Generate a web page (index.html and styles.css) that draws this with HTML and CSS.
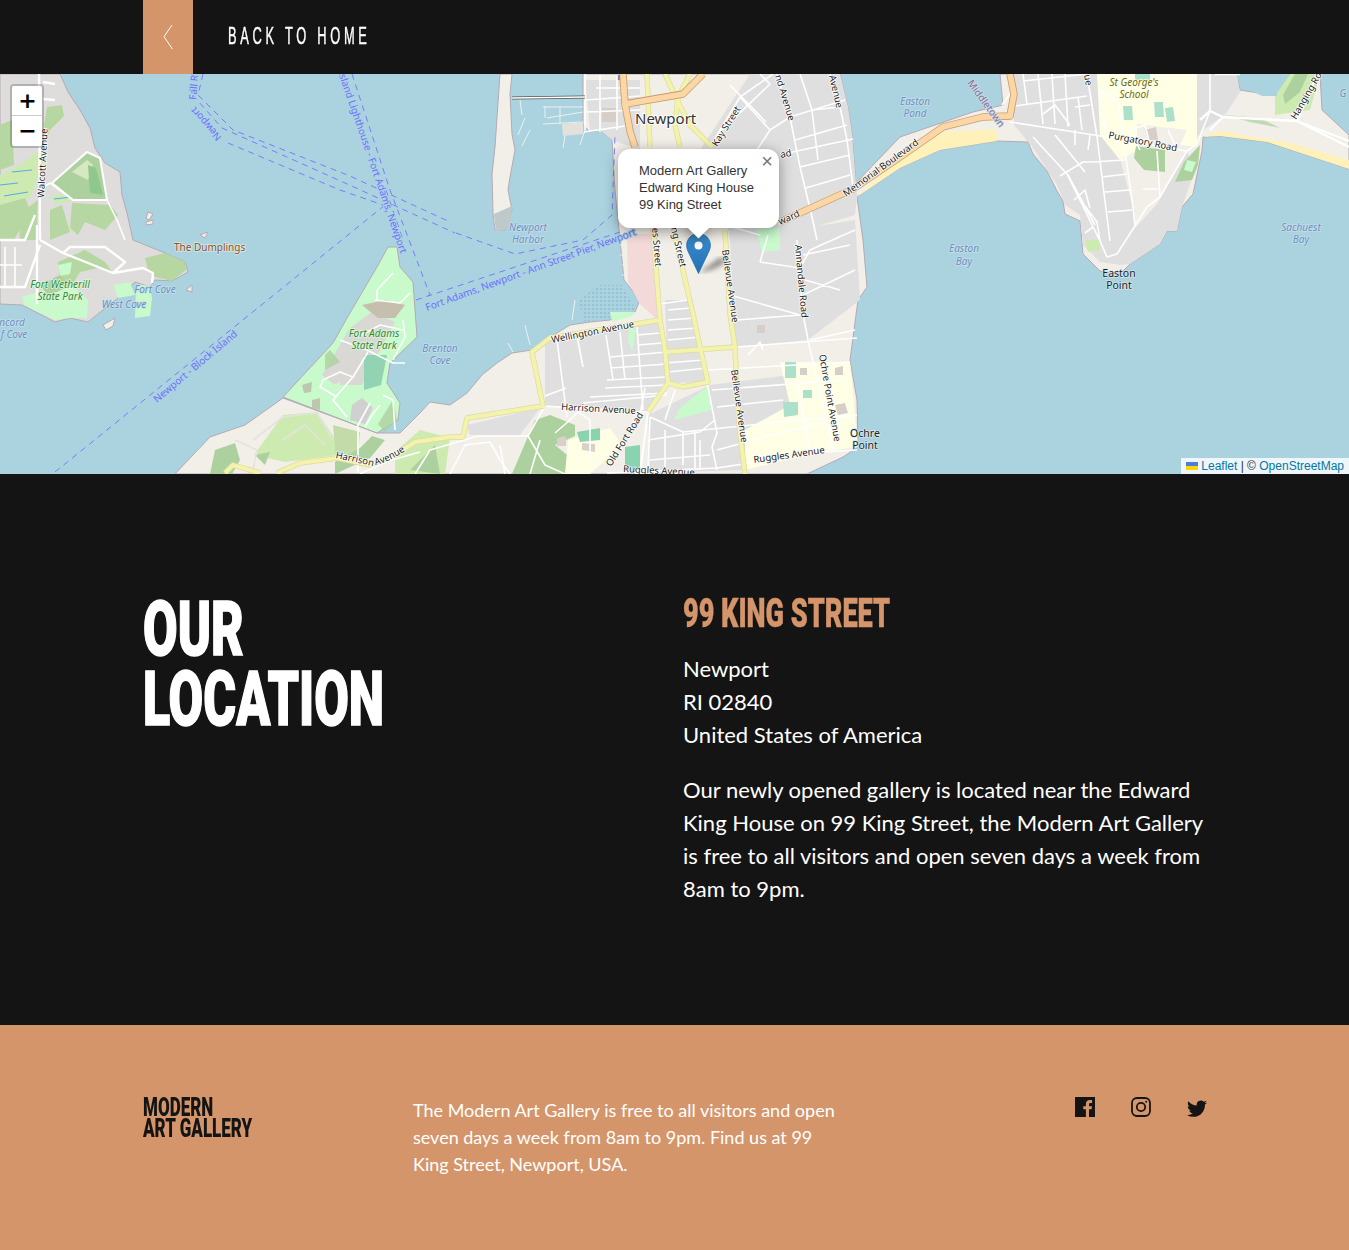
FILE: index.html
```html
<!DOCTYPE html>
<html lang="en">
<head>
  <meta charset="UTF-8">
  <title>Modern Art Gallery - Our Location</title>
  <link rel="stylesheet" href="styles.css">
</head>
<body>

  <header class="topbar">
    <a class="back-btn" href="#">
      <svg width="10" height="26" viewBox="0 0 10 26"><path d="M9 1 L1 12.7 L9.4 25" fill="none" stroke="#fff" stroke-width="1"/></svg>
    </a>
    <span class="back-text">BACK TO HOME</span>
  </header>

  <div class="map">
    <svg class="map-svg" width="1349" height="400" viewBox="0 74 1349 400">
      <defs>
        <pattern id="tidal" width="4" height="4" patternUnits="userSpaceOnUse">
          <circle cx="1" cy="1" r=".7" fill="#6f9fc0"/>
        </pattern>
      </defs>
      <rect x="0" y="74" width="1349" height="400" fill="#aad3df"/>

      <g class="tiles">
      <!-- land -->
      <path class="coast" fill="#dfdddc" d="M0,74 L60,74 L68,92 L80,110 L90,128 L95,148 L105,163 L120,172 L122,195 L127,213 L133,240 L165,253 L185,262 L188,272 L172,281 L155,280 L150,287 L135,282 L118,298 L88,322 L70,318 L55,322 L22,305 L0,304 Z"/>
      <path class="coast" fill="#f2efe9" d="M175,474 L210,437 L245,425 L283,398 L377,433 L400,433 L420,413 L430,402 L450,405 L467,393 L482,375 L497,363 L512,353 L532,350 L542,342 L570,325 L590,322 L610,320 L635,312 L640,300 L624,280 L620,240 L615,190 L612,140 L600,130 L590,132 L583,125 L583,74 L840,74 L848,107 L852,134 L857,197 L863,240 L867,287 L858,300 L850,360 L857,400 L858,447 L843,457 L807,474 Z"/>
      <path class="coast" fill="#c8facc" stroke="#8fc48a" stroke-width="2" d="M283,397 L333,343 L347,318 L377,267 L388,247 L397,247 L400,267 L413,282 L417,337 L390,363 L387,383 L400,403 L398,420 L377,433 Z"/>
      <path class="coast" fill="#f2efe9" d="M500,74 L512,74 L510,94 L512,134 L515,150 L510,177 L508,190 L512,210 L505,230 L495,230 L493,214 L492,174 L495,147 Z"/>
      <path class="coast" fill="#f2efe9" d="M1000,74 L1237,74 L1240,90 L1277,96 L1290,74 L1320,74 L1322,110 L1349,135 L1349,169 L1267,142 L1220,136 L1203,137 L1202,151 L1193,194 L1182,207 L1177,231 L1167,231 L1160,244 L1130,264 L1120,274 L1100,271 L1083,254 L1080,221 L1065,214 L1063,201 L1057,191 L1047,171 L1033,154 L1028,142 L997,141 L940,150 L900,168 L857,197 L853,186 L900,137 L973,112 L1003,105 Z"/>
      <path class="coast" fill="#f2efe9" d="M148,212 L153,214 L149,220 L146,218 Z M146,222 L153,220 L153,224 L146,225 Z M200,235 L208,232 L205,238 Z M103,325 L115,318 L113,326 L106,330 Z M186,290 L192,285 L192,292 Z"/>

      <!-- harbour details -->
      <path fill="url(#tidal)" d="M578,300 L600,285 L622,285 L636,310 L610,318 L585,322 Z"/>
      <path fill="#bfc9c9" d="M494,214 L512,206 L510,228 L496,232 Z"/>
      <g fill="none" stroke="#eef0ec" stroke-width="1">
        <path d="M543,107 L583,107 M547,118 L583,112 M543,124 L583,122 M560,107 L560,124 M567,124 L563,148 M585,130 L580,145 M545,106 L545,118 M520,100 L522,115 M525,118 L518,135 M522,146 L530,130"/>
        <path d="M620,245 L640,245 M620,255 L640,255 M622,265 L640,265 M622,275 L640,275 M530,345 L525,325 M513,352 L508,343 M575,300 L572,320"/>
      </g>
      <path fill="#e3e1dc" d="M562,124 L583,122 L583,134 L563,136 Z"/>
      <path fill="#7b86ad" d="M617,75 L623,75 L623,81 L617,81 Z"/>

      <!-- sand -->
      <path fill="#fff1ba" d="M857,197 L900,157 L943,132 L996,129 L997,141 L940,150 L900,168 Z M1203,137 L1220,131 L1290,143 L1349,160 L1349,169 L1267,142 L1220,136 Z"/>

      <!-- residential -->
      <path fill="#e0dfdf" d="M750,74 L840,74 L848,107 L852,134 L857,197 L855,215 L770,240 L730,240 L722,190 L735,150 L700,150 Z"/>
      <path fill="#e0dfdf" d="M585,80 L640,80 L640,150 L612,140 L600,130 L590,130 Z"/>
      <path fill="#e0dfdf" d="M730,240 L855,220 L860,300 L808,340 L735,347 Z"/>
      <path fill="#e0dfdf" d="M545,340 L660,320 L668,383 L648,412 L545,406 Z"/>
      <path fill="#e0dfdf" d="M665,300 L690,300 L708,382 L668,383 Z"/>
      <path fill="#e0dfdf" d="M710,385 L790,375 L800,450 L745,470 L650,473 L648,415 Z"/>
      <path fill="#e0dfdf" d="M467,425 L540,408 L520,435 L470,435 Z"/>
      <path fill="#e0dfdf" d="M1012,74 L1097,74 L1133,207 L1135,228 L1157,204 L1187,151 L1195,170 L1182,207 L1177,231 L1167,231 L1160,244 L1130,264 L1120,265 L1100,262 L1083,245 L1080,215 L1065,205 L1057,185 L1033,148 L1014,125 Z"/>
      <path fill="#e0dfdf" d="M1195,74 L1237,74 L1240,92 L1225,115 L1203,130 L1195,140 Z"/>
      <path fill="#f3d9d8" d="M627,234 L657,234 L660,322 L640,304 L628,282 Z"/>
      <path fill="#f2efe9" d="M660,234 L672,234 L688,300 L665,300 Z M680,270 L725,265 L730,314 L696,318 Z"/>

      <!-- jamestown greens -->
      <path fill="#b6d6a2" d="M47,107 L62,105 L64,116 L50,130 L46,140 L44,125 Z"/>
      <path fill="#b6d6a2" d="M0,125 L12,120 L14,165 L0,170 Z"/>
      <path fill="#cdebb0" d="M0,175 L20,165 L42,148 L46,158 L38,180 L30,198 L0,205 Z M50,197 L72,192 L76,200 L56,204 Z"/>
      <g stroke="#5ba8e8" stroke-width="1" fill="none"><path d="M0,185 L18,183 M4,196 L28,192 M12,172 L32,170 M54,199 L72,197"/></g>
      <path fill="#b6d6a2" d="M0,205 L25,198 L30,210 L14,240 L0,240 Z M18,215 L38,200 L36,240 L20,240 Z M50,210 L62,205 L70,232 L50,240 Z M72,203 L110,205 L118,215 L105,230 L85,222 L78,235 L70,228 Z"/>
      <path fill="#add19e" stroke="#fff" stroke-width="2" d="M52,183 L87,152 L100,158 L107,200 L73,200 Z"/>
      <path fill="#d5e8c2" d="M72,172 L87,160 L93,165 L88,180 Z"/>
      <path fill="#8fc88c" d="M88,165 L96,168 L103,195 L90,193 Z"/>
      <path fill="#b6d6a2" d="M58,262 L85,250 L105,262 L112,272 L98,268 L80,272 L72,285 L60,285 Z M145,258 L165,253 L185,262 L186,270 L172,281 L155,277 L148,270 Z"/>
      <path fill="#c8facc" d="M22,297 L60,285 L72,285 L88,300 L87,318 L70,318 L55,320 L24,305 Z M113,285 L130,282 L135,295 L118,298 Z M136,284 L150,286 L152,298 L150,316 L135,318 Z M58,265 L72,262 L70,274 L60,276 Z"/>
      <path fill="#add19e" d="M40,285 L60,275 L70,286 L48,296 Z"/>

      <!-- fort adams -->
      <path fill="#d9d8d5" d="M350,328 L372,312 L395,322 L380,350 L362,385 L335,385 L322,375 Z"/>
      <path fill="#c7bfae" d="M362,305 L385,300 L405,305 L395,318 L378,318 Z"/>
      <path fill="#91d3b2" d="M364,355 L387,355 L381,385 L364,390 Z"/>
      <path fill="#c8facc" d="M325,388 L340,382 L340,400 L322,398 Z"/>
      <path fill="#bcc7ad" d="M302,385 L312,382 L311,392 L304,393 Z M312,400 L320,398 L320,410 L312,408 Z"/>
      <path fill="#cfd0cf" d="M352,405 L362,398 L373,408 L365,424 L350,420 Z"/>
      <path fill="#add19e" opacity=".8" d="M325,355 L330,350 L340,362 L325,370 Z M378,424 L393,400 L397,420 L385,432 Z"/>

      <!-- mainland greens -->
      <path fill="#cdebb0" d="M254,455 L283,415 L317,412 L336,440 L336,455 L300,460 L285,462 Z"/>
      <path fill="#c2dba9" d="M333,425 L360,432 L358,455 L336,458 Z"/>
      <path fill="#add19e" d="M210,474 L215,450 L235,443 L240,460 L232,474 Z M255,455 L270,452 L265,465 Z"/>
      <path fill="#add19e" d="M335,462 L360,448 L372,436 L385,440 L370,458 L335,474 Z"/>
      <path fill="#cdebb0" d="M395,452 L420,430 L450,438 L445,474 L395,474 Z"/>
      <path fill="#add19e" d="M410,470 L435,445 L440,474 Z"/>
      <path fill="#add19e" d="M512,474 L535,420 L550,415 L575,425 L575,436 L555,445 L590,474 Z"/>
      <path fill="#ffffe5" d="M565,474 L568,440 L610,428 L622,445 L590,474 Z"/>
      <path fill="#8ad3af" d="M577,432 L600,428 L600,440 L580,442 Z M625,447 L640,445 L640,470 L625,472 Z"/>
      <path fill="#d9d0c9" d="M557,438 L566,436 L566,446 L557,446 Z M582,443 L595,444 L595,452 L582,450 Z"/>

      <!-- newport greens and schools -->
      <path fill="#c8facc" d="M610,312 L635,312 L632,316 L612,322 Z M630,325 L636,330 L632,352 L628,340 Z M680,408 L708,386 L712,410 L674,420 Z M756,228 L780,228 L780,250 L762,252 Z"/>
      <path fill="#ffffe5" d="M1097,74 L1197,74 L1197,147 L1180,145 L1187,130 L1137,124 L1137,150 L1120,160 L1100,135 Z"/>
      <path fill="#ffffe5" d="M780,362 L850,362 L858,447 L820,452 L745,470 L745,430 L790,405 Z"/>
      <path fill="#ade0cb" d="M1123,106 L1132,106 L1133,120 L1124,120 Z M1154,102 L1163,102 L1164,117 L1155,117 Z M1165,108 L1173,107 L1175,121 L1167,122 Z M785,362 L796,362 L796,378 L785,378 Z M783,402 L798,402 L798,415 L784,417 Z M1135,74 L1150,74 L1150,80 L1135,80 Z M803,390 L812,390 L812,398 L803,398 Z"/>
      <path fill="#add19e" d="M1136,146 L1165,150 L1165,172 L1144,170 L1134,158 Z M1184,162 L1200,145 L1198,165 L1192,180 L1175,182 Z"/>
      <path fill="#c8facc" d="M1187,160 L1196,162 L1192,172 L1184,170 Z"/>
      <path fill="#cdebb0" d="M1275,96 L1290,74 L1320,74 L1310,110 L1275,115 Z M1085,240 L1100,240 L1100,250 L1088,252 Z"/>
      <path fill="#add19e" d="M1283,95 L1295,74 L1308,74 L1300,92 L1285,104 Z"/>
      <path fill="#add19e" opacity=".7" d="M1225,115 L1260,118 L1280,128 L1250,122 Z"/>
      <path fill="#aad3df" d="M1237,74 L1277,74 L1277,96 L1262,96 L1240,85 Z"/>
      <path fill="#d5cfc8" d="M602,108 L618,108 L618,122 L602,122 Z M1145,130 L1156,127 L1158,140 L1148,140 Z M800,368 L807,368 L807,375 L800,375 Z M835,368 L843,366 L843,375 L835,375 Z M835,405 L845,403 L848,413 L838,415 Z M757,325 L765,325 L765,333 L757,333 Z"/>

      <!-- tertiary and residential streets -->
      <g fill="none" stroke="#fff" stroke-width="1.6" stroke-linejoin="round">
        <path stroke-width="2.4" d="M39,74 L40,240 M37,225 L37,304 M40,240 L63,253 L113,273 L143,268 L153,273 L152,283 M0,240 L25,240 L35,215 M0,287 L25,287 L40,245 M63,253 L70,247 L105,247 L125,262 L113,273 M43,82 L55,84 M43,99 L55,100"/>
        <path d="M50,183 L39,190 M50,183 L73,200 M107,200 L117,220 L125,240 M5,247 L5,287 M15,247 L15,287 M0,265 L22,265"/>
        <path stroke="#e4e3de" d="M235,440 L257,450 L253,470 M253,440 L283,417 L317,413 L333,440 M283,440 L305,425 L325,445"/>
        <path d="M358,427 L358,473 M370,403 L357,427 M340,340 L367,350 L393,363 L405,363 M368,352 L353,377 L340,372 L323,380 L320,387 L337,397 M353,377 L333,400 L347,417 M403,320 L405,337 L393,360 M358,337 L380,325 L403,330 M377,300 L377,290 L393,273 M375,300 L400,303 L410,293 M380,405 L372,415 L365,427 M383,395 L393,400 L395,430"/>
        <path d="M360,474 L385,462 L420,452 M415,474 L430,450 L478,436 L528,436 L545,406 M450,474 L465,445 L490,442 L500,460 L510,474 M528,436 L545,465 L565,474 M555,433 L570,420 L578,412 L590,420 L590,460 M505,474 L500,445 M530,474 L540,440"/>
        <path d="M596,88 L640,88 M586,100 L640,96 M586,112 L640,110 M584,132 L625,126 M600,75 L600,132 M617,75 L617,130 M585,74 L585,130"/>
        <path d="M710,147 L740,97 L773,74 M777,74 L790,117 L800,167 L812,217 L817,240 M830,74 L840,107 L847,140 L853,187 M783,154 L853,139 M760,74 L770,84 L722,130 M740,97 L770,130 L790,117 M770,130 L757,150 M730,85 L766,122 M800,74 L812,110 L818,160 M812,110 L840,107 M790,117 L845,100 M795,140 L847,125 M757,150 L770,165 M800,167 L850,155 M806,188 L850,175 M815,205 L850,187 M757,150 L745,175 M760,170 L780,225 M768,235 L760,262 M760,262 L800,268 M725,225 L760,235 M800,268 L810,250 L855,230 M803,295 L855,270 M803,255 L850,245 M805,280 L840,290 M730,295 L800,315 M810,340 L855,330"/>
        <path d="M797,240 L803,314 L808,340 L833,450 M543,406 L647,412 M607,473 L717,468 L823,452 L857,450 M650,417 L683,432 L850,415 M737,347 L857,338 M708,370 L850,362 M712,390 L843,380 M717,407 L783,400 M717,450 L783,432 L857,415 M707,382 L717,433 L712,447 L717,470 M797,382 L810,450 M737,320 L800,315 M688,300 L660,304 M668,310 L690,308 M668,320 L695,318 M668,330 L697,328 M668,340 L700,337 M665,363 L704,360 M668,372 L707,368"/>
        <path d="M557,340 L567,417 M577,336 L583,367 M606,335 L613,380 M620,332 L625,380 M637,327 L643,410 M610,357 L667,352 M610,368 L667,364 M607,380 L667,377 M605,388 L667,385 M590,397 L667,393 M637,335 L660,333 M638,345 L662,343 M583,403 L667,395 M545,396 L566,388 M645,388 L640,415 M660,395 L650,412 M675,390 L665,420 M650,417 L648,473 M648,440 L700,432 M683,432 L683,465 M695,430 L695,468 M700,440 L700,470 M715,420 L700,432 M650,460 L710,455 M665,430 L665,470 M735,395 L745,470 M748,355 L760,342 L763,350"/>
        <path stroke-width="2" d="M648,412 L640,473"/>
        <path d="M1010,122 L1107,137 L1187,151 L1197,144 L1210,111 L1210,74 M1033,137 L1067,174 L1100,241 L1107,257 L1117,254 L1147,207 L1160,197 L1187,151 M1087,74 L1097,137 L1110,241 M1117,94 L1133,207 L1135,227 M1157,151 L1160,197 M1002,105 L1013,90 M1023,74 L1027,104 M1038,74 L1043,124 M1052,74 L1055,124 M1065,74 L1068,127 M1078,97 L1082,130 M1015,106 L1087,96 M1023,81 L1087,74 M1043,114 L1055,105 L1070,125 M1075,107 L1090,105 M1092,162 L1125,160 M1102,177 L1127,174 M1105,192 L1130,190 M1108,212 L1132,210 M1060,176 L1083,162 L1092,162 M1074,200 L1085,190 L1090,208 M1068,175 L1095,225 M1055,135 L1085,172 M1075,130 L1075,145 M1090,135 L1088,150 M1143,189 L1160,189 M1085,206 L1097,222 L1100,241 M1093,227 L1085,233"/>
        <path stroke-width="2.4" d="M1210,111 L1223,117 L1297,121 L1349,147 M1210,111 L1200,120 M1223,117 L1210,130 M1297,121 L1317,74 M1297,121 L1349,141 M1240,74 L1215,74"/>
        <path d="M1115,100 L1100,90 L1105,130 M1140,150 L1130,130 L1145,125 L1150,145 M1168,130 L1175,145 M1110,87 L1150,87"/>
      </g>

      <!-- causeway -->
      <path d="M512,98 L585,97" fill="none" stroke="#555" stroke-width="3"/>
      <path d="M512,98 L585,97" fill="none" stroke="#fff" stroke-width="1.6"/>

      <!-- secondary roads -->
      <g fill="none" stroke="#dcdc9c" stroke-width="5.4" stroke-linejoin="round">
        <path id="sec" d="M647,74 L650,147 M653,227 L660,320 L665,350 L668,383 L648,412 M673,227 L693,314 L700,347 L708,382 L683,387 L668,383 M725,231 L730,314 L735,347 L737,393 L740,433 L745,474 M665,352 L735,347 M450,437 L463,437 L467,418 L543,406 L532,352 L550,338 L660,320 M277,473 L300,463 L337,458 L370,465 L395,455 L415,442 L450,437 M225,473 L233,465 L260,473 M665,74 L677,100 L690,125 L712,147 M690,74 L678,98 L675,125 L680,147"/>
      </g>
      <use href="#sec" fill="none" stroke="#f3f3ad" stroke-width="4"/>

      <!-- primary roads -->
      <g fill="none" stroke="#c69c6d" stroke-width="7.4" stroke-linejoin="round">
        <path id="pri" d="M623,74 L625,104 L683,94 L703,74 M625,104 L630,131 L635,147 M780,222 L853,189 L900,157 L943,127 L983,117 L1010,116 L1014,94 L1010,74"/>
      </g>
      <use href="#pri" fill="none" stroke="#fcd6a4" stroke-width="5.8"/>
      </g>

      <!-- ferry routes -->
      <g fill="none" stroke="#7b7bff" stroke-width="1" stroke-dasharray="6 5">
        <path d="M203,74 L198,95 L233,130 L350,176 L450,222"/>
        <path d="M192,74 L190,92 L222,128 L345,183 L455,233"/>
        <path d="M228,143 L340,190 L383,205"/>
        <path d="M352,74 L390,190 L430,295 L423,298"/>
        <path d="M55,472 L385,205"/>
        <path d="M416,300 L620,232"/>
        <path d="M456,233 L515,254 L583,240 L612,215 L615,135"/>
        <path d="M386,190 L403,240"/>
      </g>

      <!-- water and place labels -->
      <g class="lbl-ferry">
        <text transform="translate(157,403) rotate(-40)">Newport - Block Island</text>
        <text transform="translate(427,311) rotate(-20)">Fort Adams, Newport - Ann Street Pier, Newport</text>
        <text transform="translate(338,72) rotate(71)">Island Lighthouse - Fort Adams, Newport</text>
        <text transform="translate(196,100) rotate(-85)">Fall R</text>
        <text transform="translate(222,137) rotate(-131)">Newport</text>
      </g>
      <g class="lbl-water">
        <text x="528" y="231">Newport</text><text x="528" y="243">Harbor</text>
        <text x="915" y="105">Easton</text><text x="915" y="117">Pond</text>
        <text x="964" y="252">Easton</text><text x="964" y="265">Bay</text>
        <text x="1301" y="231">Sachuest</text><text x="1301" y="243">Bay</text>
        <text x="440" y="352">Brenton</text><text x="440" y="364">Cove</text>
        <text x="155" y="293">Fort Cove</text>
        <text x="124" y="308">West Cove</text>
        <text x="12" y="326">ncord</text><text x="14" y="338">f Cove</text>
        <text x="1343" y="97">G</text>
      </g>
      <g class="lbl-park">
        <text x="60" y="288">Fort Wetherill</text><text x="60" y="300">State Park</text>
        <text x="374" y="337">Fort Adams</text><text x="374" y="349">State Park</text>
      </g>
      <g class="lbl-school">
        <text x="1134" y="86">St George's</text><text x="1134" y="98">School</text>
      </g>
      <text class="lbl-feature" x="174" y="251">The Dumplings</text>
      <text class="lbl-town" x="635" y="124">Newport</text>
      <g class="lbl-place">
        <text x="1119" y="277">Easton</text><text x="1119" y="289">Point</text>
        <text x="865" y="437">Ochre</text><text x="865" y="449">Point</text>
      </g>
      <text class="lbl-bound" transform="translate(967,83) rotate(54)">Middletown</text>

      <!-- road labels -->
      <path id="harr" d="M335,458 Q360,463 372,466 Q390,462 408,449" fill="none"/>
      <g class="lbl-road">
        <text transform="translate(44,198) rotate(-87)">Walcott Avenue</text>
        <text transform="translate(552,343) rotate(-11)">Wellington Avenue</text>
        <text transform="translate(561,410) rotate(3)">Harrison Avenue</text>
        <text><textPath href="#harr">Harrison Avenue</textPath></text>
        <text transform="translate(754,463) rotate(-8)">Ruggles Avenue</text>
        <text transform="translate(623,472) rotate(3)">Ruggles Avenue</text>
        <text transform="translate(611,467) rotate(-58)">Old Fort Road</text>
        <text transform="translate(722,250) rotate(82)">Bellevue Avenue</text>
        <text transform="translate(731,370) rotate(82)">Bellevue Avenue</text>
        <text transform="translate(795,245) rotate(85)">Annandale Road</text>
        <text transform="translate(819,355) rotate(80)">Ochre Point Avenue</text>
        <text transform="translate(671,228) rotate(77)">ng Street</text>
        <text transform="translate(652,228) rotate(85)">es Street</text>
        <text transform="translate(717,147) rotate(-58)">Kay Street</text>
        <text transform="translate(846,197) rotate(-36)">Memorial Boulevard</text>
        <text transform="translate(780,225) rotate(-24)">ward</text>
        <text transform="translate(781,158) rotate(-12)">ad</text>
        <text transform="translate(1108,138) rotate(11)">Purgatory Road</text>
        <text transform="translate(1296,120) rotate(-60)">Hanging Ro</text>
        <text transform="translate(775,76) rotate(73)">nd Avenue</text>
        <text transform="translate(829,76) rotate(77)">Avenue</text>
        <text transform="translate(1084,75) rotate(80)">ue</text>
      </g>
    </svg>

    <div class="zoom-ctl">
      <a class="zoom-btn" href="#">+</a>
      <a class="zoom-btn" href="#">&minus;</a>
    </div>

    <div class="marker">
      <svg width="50" height="41" viewBox="0 0 50 41">
        <defs>
          <linearGradient id="pin" x1="0" y1="0" x2="0" y2="1">
            <stop offset="0" stop-color="#3e8fd0"/>
            <stop offset="1" stop-color="#1f6fb5"/>
          </linearGradient>
          <filter id="soft"><feGaussianBlur stdDeviation="2.4"/></filter>
        </defs>
        <path d="M13 40 L33 25 Q40 24 38 30 Q30 37 13 40 Z" fill="#000" opacity=".4" filter="url(#soft)"/>
        <path d="M12.5 0.6 C5.8 0.6 0.6 5.8 0.6 12.4 C0.6 15 1.6 17.6 2.8 19.9 L12.5 40.4 L22.2 19.9 C23.4 17.6 24.4 15 24.4 12.4 C24.4 5.8 19.2 0.6 12.5 0.6 Z" fill="url(#pin)" stroke="#2571ad" stroke-width=".8"/>
        <circle cx="12.5" cy="12.5" r="4" fill="#fff"/>
      </svg>
    </div>

    <div class="popup">
      <a class="popup-close" href="#">&#215;</a>
      <div class="popup-content">Modern Art Gallery<br>Edward King House<br>99 King Street</div>
      <div class="popup-tip-wrap"><div class="popup-tip"></div></div>
    </div>

    <div class="attrib">
      <svg width="12" height="8" viewBox="0 0 12 8"><rect width="12" height="4" fill="#4C7BE1"/><rect y="4" width="12" height="4" fill="#FFD500"/></svg>
      <a href="#">Leaflet</a> | &copy; <a href="#">OpenStreetMap</a>
    </div>
  </div>

  <section class="location">
    <h1 class="loc-title">OUR<br>LOCATION</h1>
    <div class="loc-info">
      <h2 class="loc-street">99 KING STREET</h2>
      <p>Newport<br>RI 02840<br>United States of America</p>
      <p>Our newly opened gallery is located near the Edward King House on 99 King Street, the Modern Art Gallery is free to all visitors and open seven days a week from 8am to 9pm.</p>
    </div>
  </section>

  <footer class="footer">
    <div class="logo">MODERN<br>ART GALLERY</div>
    <p class="foot-text">The Modern Art Gallery is free to all visitors and open seven days a week from 8am to 9pm. Find us at 99 King Street, Newport, USA.</p>
    <div class="social">
      <a href="#"><svg width="20" height="20" viewBox="0 0 20 20"><path fill="#141414" d="M0 0 H20 V20 H14 V12.3 H16.6 L17 9.3 H14 V7.4 C14 6.5 14.3 5.9 15.5 5.9 H17.1 V3.2 C16.8 3.2 15.9 3.1 14.8 3.1 C12.5 3.1 10.9 4.5 10.9 7.1 V9.3 H8.3 V12.3 H10.9 V20 H0 Z"/></svg></a>
      <a href="#"><svg width="20" height="20" viewBox="0 0 20 20" fill="none" stroke="#141414" stroke-width="1.8"><rect x="1" y="1" width="18" height="18" rx="5"/><circle cx="10" cy="10" r="4.2"/><circle cx="15.2" cy="4.8" r="1" fill="#141414" stroke="none"/></svg></a>
      <a href="#"><svg width="20" height="20" viewBox="0 -2 24 24" overflow="visible"><path fill="#141414" d="M23.953 4.57a10 10 0 01-2.825.775 4.958 4.958 0 002.163-2.723c-.951.555-2.005.959-3.127 1.184a4.92 4.92 0 00-8.384 4.482C7.69 8.095 4.067 6.13 1.64 3.162a4.822 4.822 0 00-.666 2.475c0 1.71.87 3.213 2.188 4.096a4.904 4.904 0 01-2.228-.616v.06a4.923 4.923 0 003.946 4.827 4.996 4.996 0 01-2.212.085 4.936 4.936 0 004.604 3.417 9.867 9.867 0 01-6.102 2.105c-.39 0-.779-.023-1.17-.067a13.995 13.995 0 007.557 2.209c9.053 0 13.998-7.496 13.998-13.985 0-.21 0-.42-.015-.63A9.935 9.935 0 0024 4.59z"/></svg></a>
    </div>
  </footer>

</body>
</html>
```

FILE: styles.css
```css
body {
  margin: 0;
  font-family: Lato, "Open Sans", sans-serif;
  background-color: #141414;
  color: #fff;
}
a {
  text-decoration: none;
}

/* top bar */
.topbar {
  display: flex;
  align-items: center;
  height: 74px;
  padding-left: 143px;
  background-color: #141414;
}
.back-btn {
  display: flex;
  align-items: center;
  justify-content: center;
  width: 50px;
  height: 74px;
  background-color: #d5956b;
}
.back-text {
  margin: 0 0 2px 35px;
  font-family: "Liberation Sans", sans-serif;
  font-size: 23px;
  letter-spacing: 6.6px;
  white-space: nowrap;
  transform: scaleX(0.56);
  transform-origin: left center;
  -webkit-text-stroke: .4px #fff;
}

/* map */
.map {
  position: relative;
  height: 400px;
  overflow: hidden;
  background-color: #aad3df;
}
.map-svg {
  display: block;
}
.tiles {
  filter: blur(.5px);
}
.coast {
  stroke: #b5a9b3;
  stroke-width: 1;
}
.map-svg text {
  font-family: "Noto Sans", "Open Sans", sans-serif;
  font-size: 10px;
  paint-order: stroke;
  stroke-linejoin: round;
}
.lbl-ferry text {
  fill: #6f6fff;
  stroke: #aad3df;
  stroke-width: 2px;
}
.lbl-water text {
  fill: #6c8fc4;
  font-style: italic;
  text-anchor: middle;
  stroke: #c6e0e9;
  stroke-width: 1.5px;
}
.lbl-park text {
  fill: #2b8a36;
  font-style: italic;
  text-anchor: middle;
  stroke: #e4f5dc;
  stroke-width: 1.5px;
}
.lbl-school text {
  fill: #6c6c22;
  font-style: italic;
  text-anchor: middle;
  stroke: #ffffe5;
  stroke-width: 1.5px;
}
.lbl-feature {
  fill: #7d5230;
  stroke: #e2e9e4;
  stroke-width: 1.5px;
}
.map-svg .lbl-town {
  fill: #333;
  font-size: 15px;
  stroke: #fff;
  stroke-width: 2px;
}
.lbl-place text {
  fill: #222;
  font-size: 10.5px !important;
  text-anchor: middle;
  stroke: #d5e8ee;
  stroke-width: 1.5px;
}
.lbl-bound {
  fill: #8d6a94;
  stroke: #c6e0e9;
  stroke-width: 1.5px;
}
.lbl-road text {
  fill: #1c1c1c;
  font-size: 9.5px !important;
  stroke: #fff;
  stroke-width: 1.5px;
}

/* leaflet bits */
.zoom-ctl {
  position: absolute;
  top: 10px;
  left: 10px;
  border: 2px solid rgba(0,0,0,0.2);
  border-radius: 4px;
  background-clip: padding-box;
}
.zoom-btn {
  display: block;
  width: 30px;
  height: 30px;
  background-color: #fff;
  color: #000;
  font: bold 22px/30px "DejaVu Sans", sans-serif;
  text-align: center;
  text-indent: 1px;
}
.zoom-btn:first-child {
  border-bottom: 1px solid #ccc;
  height: 29px;
  border-radius: 2px 2px 0 0;
}
.zoom-btn:last-child {
  border-radius: 0 0 2px 2px;
}
.marker {
  position: absolute;
  left: 686px;
  top: 159px;
  line-height: 0;
}
.popup {
  position: absolute;
  left: 618px;
  top: 75px;
  width: 161px;
  height: 79px;
  background-color: #fff;
  color: #333;
  border-radius: 12px;
  box-shadow: 0 3px 14px rgba(0,0,0,0.4);
}
.popup-content {
  padding: 13px 0 0 21px;
  font: 13px/17px "Liberation Sans", Arial, sans-serif;
  white-space: nowrap;
}
.popup-close {
  position: absolute;
  top: 0;
  right: 0;
  width: 24px;
  height: 24px;
  color: #757575;
  font: 20px/24px "Liberation Sans", sans-serif;
  text-align: center;
}
.popup-tip-wrap {
  position: absolute;
  left: 60px;
  top: 100%;
  width: 40px;
  height: 20px;
  overflow: hidden;
}
.popup-tip {
  width: 17px;
  height: 17px;
  margin: -10px auto 0;
  background-color: #fff;
  transform: rotate(45deg);
  box-shadow: 0 3px 14px rgba(0,0,0,0.4);
}
.attrib {
  position: absolute;
  right: 0;
  bottom: 0;
  padding: 0 5px;
  height: 16px;
  background-color: rgba(255,255,255,0.8);
  color: #333;
  font: 12px/16px "Liberation Sans", Arial, sans-serif;
  white-space: nowrap;
}
.attrib a {
  color: #0078a8;
}

/* location */
.location {
  display: grid;
  grid-template-columns: 540px 540px;
  height: 551px;
  box-sizing: border-box;
  padding: 118px 0 0 143px;
}
.loc-title {
  margin: 2px 0 0;
  font-family: Roboto, "Liberation Sans", sans-serif;
  font-size: 76px;
  line-height: 70px;
  font-weight: 900;
  white-space: nowrap;
  transform: scaleX(0.66);
  transform-origin: left top;
  -webkit-text-stroke: 1.5px #fff;
}
.loc-street {
  margin: 0 0 18px;
  color: #d5956b;
  font-family: Roboto, "Liberation Sans", sans-serif;
  font-size: 41px;
  line-height: 42px;
  font-weight: 900;
  white-space: nowrap;
  transform: scaleX(0.66);
  transform-origin: left top;
  -webkit-text-stroke: .5px #d5956b;
}
.loc-info p {
  margin: 0 0 22px;
  font-size: 22px;
  line-height: 33px;
}

/* footer */
.footer {
  display: grid;
  grid-template-columns: 270px 430px 1fr;
  height: 225px;
  box-sizing: border-box;
  padding: 72px 142px 0 143px;
  background-color: #d5956b;
  color: #141414;
}
.logo {
  font-family: Roboto, "Liberation Sans", sans-serif;
  font-size: 25px;
  line-height: 21px;
  font-weight: 900;
  white-space: nowrap;
  transform: scaleX(0.68);
  transform-origin: left top;
}
.foot-text {
  margin: 0;
  color: #fff;
  font-size: 18px;
  line-height: 27px;
}
.social {
  display: flex;
  justify-content: flex-end;
  gap: 36px;
}
.social a {
  display: block;
  height: 20px;
}
```
